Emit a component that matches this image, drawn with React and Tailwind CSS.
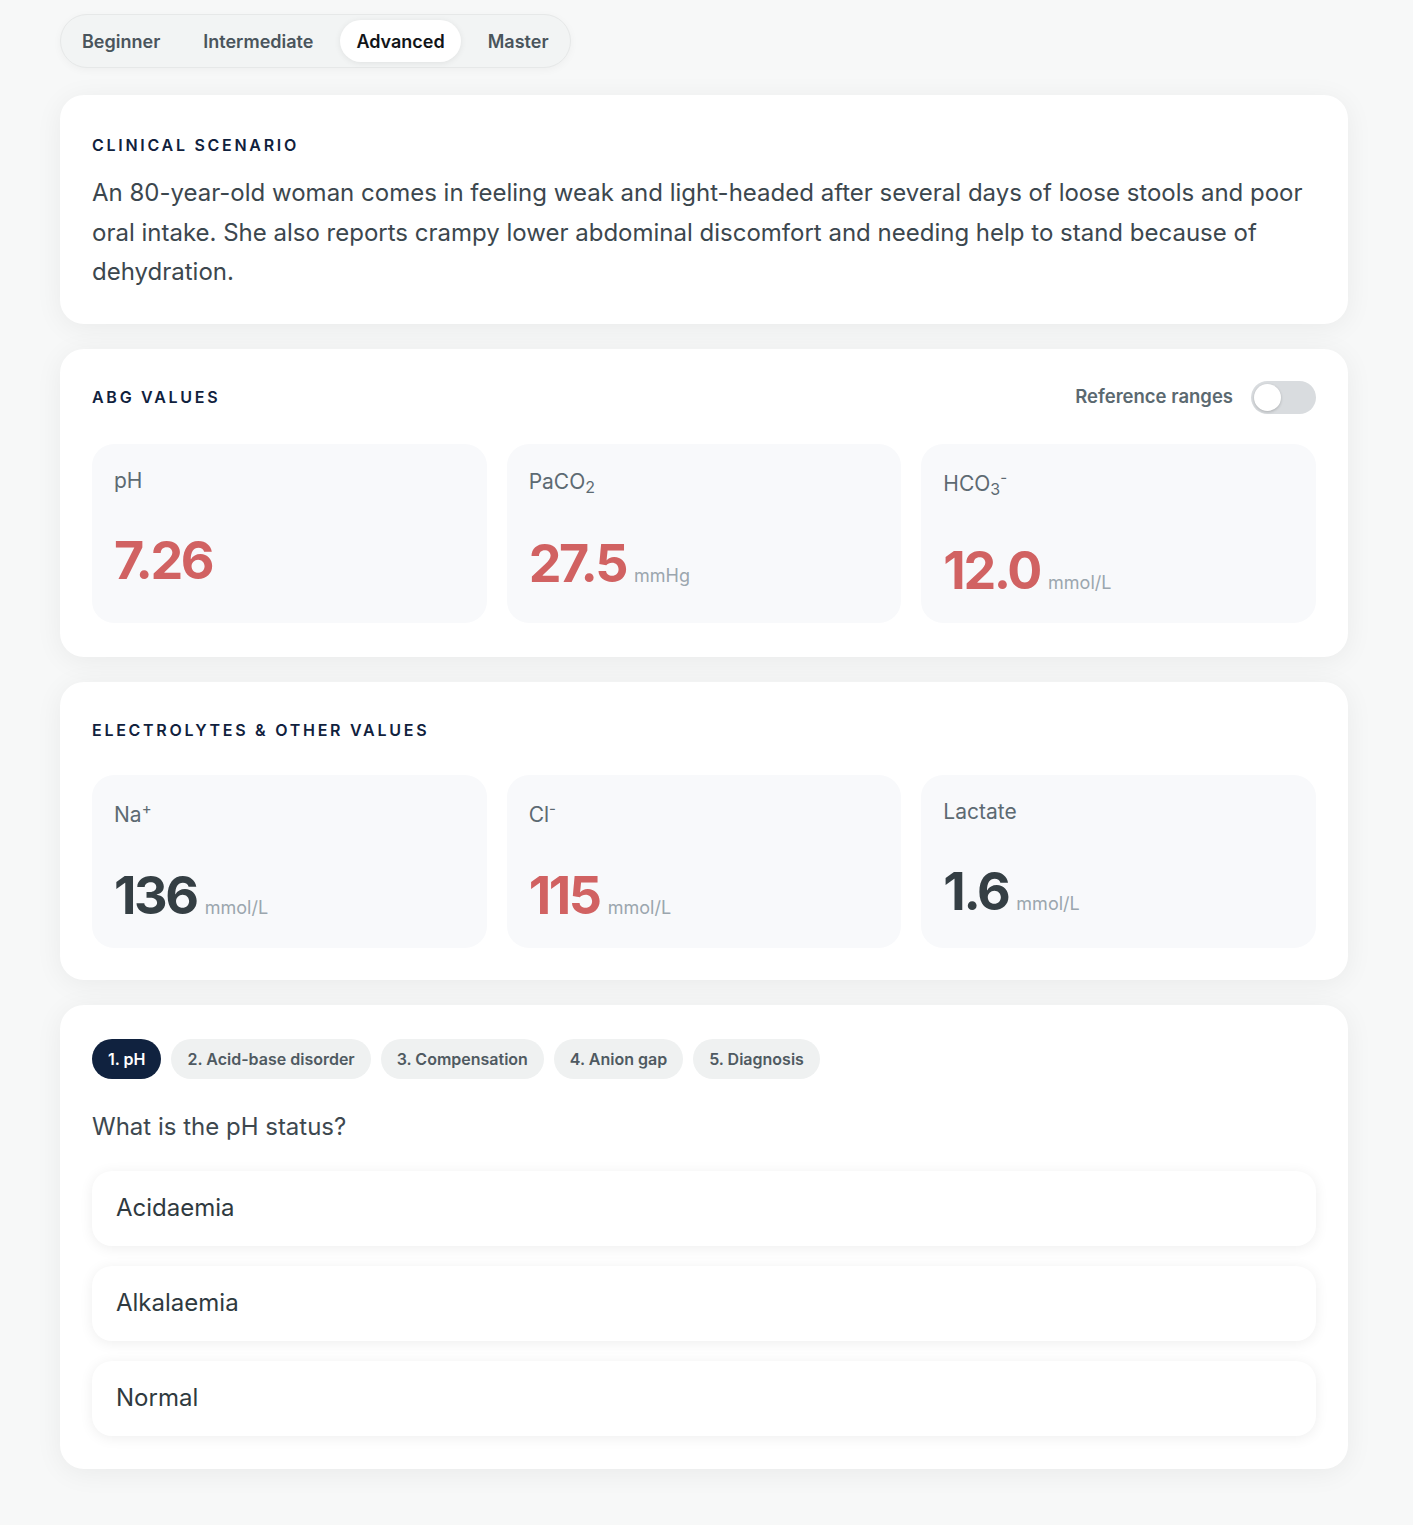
import { useState } from 'react';

const LEVELS = ['Beginner', 'Intermediate', 'Advanced', 'Master'];
const STEPS = ['1. pH', '2. Acid-base disorder', '3. Compensation', '4. Anion gap', '5. Diagnosis'];
const OPTIONS = ['Acidaemia', 'Alkalaemia', 'Normal'];

function SectionTitle({ children }) {
  return (
    <h2 className="text-[16px] font-semibold uppercase tracking-[0.17em] text-[#10213d] leading-6">
      {children}
    </h2>
  );
}

// labelPad / valueGap keep the numbers lined up like the original when sub/superscripts push the label down
function ValueCard({ label, value, unit, abnormal, labelPad = 'pt-0', valueGap = 'mt-[38px]' }) {
  return (
    <div className="rounded-[22px] bg-[#f8f9fb] px-[22px] pt-[23px] pb-6 flex flex-col">
      <div className={`text-[21px] leading-7 text-[#5d6a72] ${labelPad}`}>{label}</div>
      <div className={`flex items-baseline gap-2 ${valueGap}`}>
        <span className={`text-[52px] leading-[56px] font-bold tracking-[-0.045em] ${abnormal ? 'text-[#d16262]' : 'text-[#353f44]'}`}>
          {value}
        </span>
        {unit && <span className="text-[18px] text-[#9ba6ae]">{unit}</span>}
      </div>
    </div>
  );
}

export default function App() {
  const [level, setLevel] = useState('Advanced');
  const [step, setStep] = useState(0);
  const [showRanges, setShowRanges] = useState(false);

  return (
    <div className="min-h-[1525px] bg-[#f7f8f8] pt-[14px] pb-[55px] pl-[60px]" style={{ fontFamily: 'Inter, "Noto Sans", sans-serif' }}>
      <div className="w-[1288px]">
        {/* Level selector */}
        <div className="inline-flex items-center gap-[11px] rounded-full bg-[#f2f4f4] border border-[#e6e8e8] p-[5px] shadow-[0_2px_8px_rgba(0,0,0,0.04)]">
          {LEVELS.map(l => (
            <button key={l} onClick={() => setLevel(l)}
              className={`h-[42px] px-4 rounded-full text-[18px] font-semibold ${
                level === l ? 'bg-white text-[#111418] shadow-[0_1px_6px_rgba(0,0,0,0.08)]' : 'text-[#4a555c]'
              }`}>
              {l}
            </button>
          ))}
        </div>

        {/* Clinical scenario */}
        <div className="mt-[27px] rounded-[24px] bg-white px-8 pt-[38px] pb-8 shadow-[0_4px_28px_rgba(0,0,0,0.06)]">
          <SectionTitle>Clinical scenario</SectionTitle>
          <p className="mt-4 text-[24px] leading-[39.5px] text-[#3c474e]">
            An 80-year-old woman comes in feeling weak and light-headed after several days of loose stools and poor oral intake. She also reports crampy lower abdominal discomfort and needing help to stand because of dehydration.
          </p>
        </div>

        {/* ABG values */}
        <div className="mt-[25px] rounded-[24px] bg-white px-8 pt-8 pb-[34px] shadow-[0_4px_28px_rgba(0,0,0,0.06)]">
          <div className="flex items-center justify-between h-[33px]">
            <SectionTitle>ABG values</SectionTitle>
            <div className="flex items-center gap-[18px]">
              <span className="text-[18.5px] font-semibold text-[#5b6970]">Reference ranges</span>
              <button onClick={() => setShowRanges(!showRanges)}
                className={`w-[65px] h-[33px] rounded-full p-[3px] flex ${showRanges ? 'bg-[#10213d] justify-end' : 'bg-[#d9dcdf] justify-start'}`}>
                <span className="w-[27px] h-[27px] rounded-full bg-white shadow-[0_1px_3px_rgba(0,0,0,0.2)]" />
              </button>
            </div>
          </div>
          <div className="mt-[30px] grid grid-cols-3 gap-5">
            <ValueCard label="pH" value="7.26" abnormal />
            <ValueCard label={<>PaCO<sub className="text-[16px]">2</sub></>} value="27.5" unit="mmHg" abnormal
              labelPad="pt-[1px]" valueGap="mt-[40px]" />
            <ValueCard label={<>HCO<sub className="text-[16px]">3</sub><sup className="text-[15px]">-</sup></>} value="12.0" unit="mmol/L" abnormal
              labelPad="pt-[3px]" valueGap="mt-[45px]" />
          </div>
        </div>

        {/* Electrolytes */}
        <div className="mt-[25px] rounded-[24px] bg-white px-8 pt-[36px] pb-8 shadow-[0_4px_28px_rgba(0,0,0,0.06)]">
          <SectionTitle>Electrolytes &amp; other values</SectionTitle>
          <div className="mt-[33px] grid grid-cols-3 gap-5">
            <ValueCard label={<>Na<sup className="text-[15px]">+</sup></>} value="136" unit="mmol/L"
              labelPad="pt-[3px]" valueGap="mt-[39px]" />
            <ValueCard label={<>Cl<sup className="text-[15px]">-</sup></>} value="115" unit="mmol/L" abnormal
              labelPad="pt-[3px]" valueGap="mt-[39px]" />
            <ValueCard label="Lactate" value="1.6" unit="mmol/L" />
          </div>
        </div>

        {/* Question */}
        <div className="mt-[25px] rounded-[24px] bg-white px-8 pt-[34px] pb-[33px] shadow-[0_4px_28px_rgba(0,0,0,0.06)]">
          <div className="flex gap-2.5">
            {STEPS.map((s, i) => (
              <button key={s} onClick={() => setStep(i)}
                className={`h-10 px-4 rounded-full text-[16px] font-semibold ${
                  step === i ? 'bg-[#10223f] text-white' : 'bg-[#eff1f1] text-[#4f5a61]'
                }`}>
                {s}
              </button>
            ))}
          </div>
          <p className="mt-8 text-[24px] leading-8 text-[#3d484f]">What is the pH status?</p>
          <div className="mt-7 flex flex-col gap-5">
            {OPTIONS.map(o => (
              <button key={o}
                className="h-[75px] px-6 rounded-[20px] bg-white text-left text-[24px] text-[#2f3a40] shadow-[0_2px_14px_rgba(0,0,0,0.07)]">
                {o}
              </button>
            ))}
          </div>
        </div>
      </div>
    </div>
  );
}
